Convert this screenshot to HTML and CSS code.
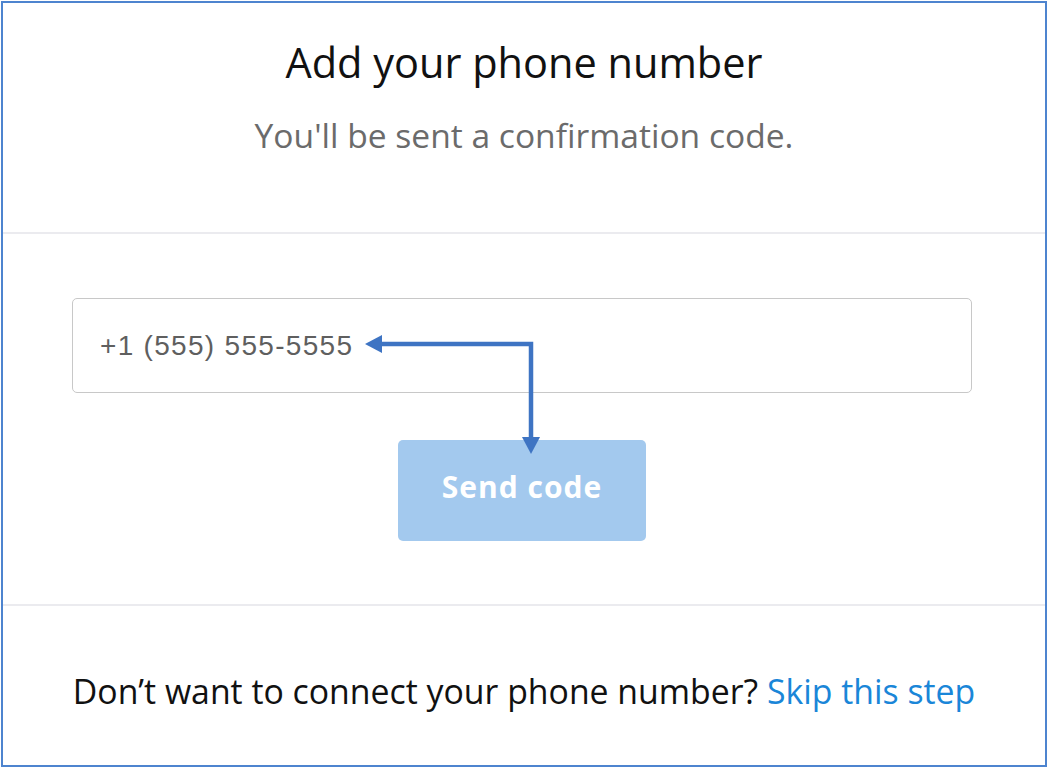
FILE: index.html
```html
<!DOCTYPE html>
<html>
<head>
<meta charset="utf-8">
<link rel="stylesheet" href="styles.css">
</head>
<body>
<div class="frame">
  <header class="head">
    <h1 class="title">Add your phone number</h1>
    <p class="subtitle">You'll be sent a confirmation code.</p>
  </header>
  <section class="form">
    <div class="input">+1 (555) 555-5555</div>
    <button class="send">Send code</button>
    <svg class="arrow" width="200" height="140" viewBox="0 0 200 140">
      <path d="M27 20 H176 V115" fill="none" stroke="#3e74c3" stroke-width="4.5"/>
      <polygon points="10,20 27,11 27,29" fill="#3e74c3"/>
      <polygon points="167,113 185,113 176,130" fill="#3e74c3"/>
    </svg>
  </section>
  <footer class="foot">
    <p class="skip">Don’t want to connect your phone number? <a class="link">Skip this step</a></p>
  </footer>
</div>
</body>
</html>
```
FILE: styles.css
```css
html, body { margin: 0; padding: 0; background: #fff; }
body { font-family: "Open Sans", Lato, sans-serif; }
.frame {
  margin: 1px;
  width: 1042px;
  height: 762px;
  border: 2px solid #4d84cf;
  display: flex;
  flex-direction: column;
}
.head {
  height: 229px;
  border-bottom: 2px solid #ebebef;
  display: flex;
  flex-direction: column;
  align-items: center;
}
.title {
  margin: 34px 0 0;
  font-size: 41.5px;
  font-weight: 400;
  line-height: 50px;
  color: #111;
}
.subtitle {
  margin: 28px 0 0;
  font-size: 33.6px;
  line-height: 40px;
  color: #6b6b6b;
}
.form {
  position: relative;
  height: 372px;
  border-bottom: 2px solid #ebebef;
  display: flex;
  flex-direction: column;
  align-items: flex-start;
  padding-left: 69px;
  box-sizing: border-box;
}
.input {
  margin-top: 64px;
  width: 900px;
  height: 95px;
  box-sizing: border-box;
  border: 1.5px solid #c8c8c8;
  border-radius: 5px;
  padding: 0 27px;
  display: flex;
  align-items: center;
  font-family: "Liberation Sans", Arial, sans-serif;
  font-size: 28px;
  letter-spacing: 1.3px;
  color: #5f5f5f;
}
.send {
  margin: 47px 0 0 326px;
  width: 248px;
  height: 101px;
  padding: 0 0 8px;
  border: none;
  border-radius: 5px;
  background: #a3c9ee;
  color: #fff;
  font-family: "Open Sans", sans-serif;
  font-weight: 700;
  font-size: 30px;
  letter-spacing: 1px;
}
.arrow {
  position: absolute;
  left: 352px;
  top: 90px;
}
.foot {
  flex: 1;
  display: flex;
  justify-content: center;
  align-items: center;
}
.skip {
  margin: 11px 0 0;
  font-size: 33.8px;
  color: #111;
}
.link { color: #1a86d8; }
```
